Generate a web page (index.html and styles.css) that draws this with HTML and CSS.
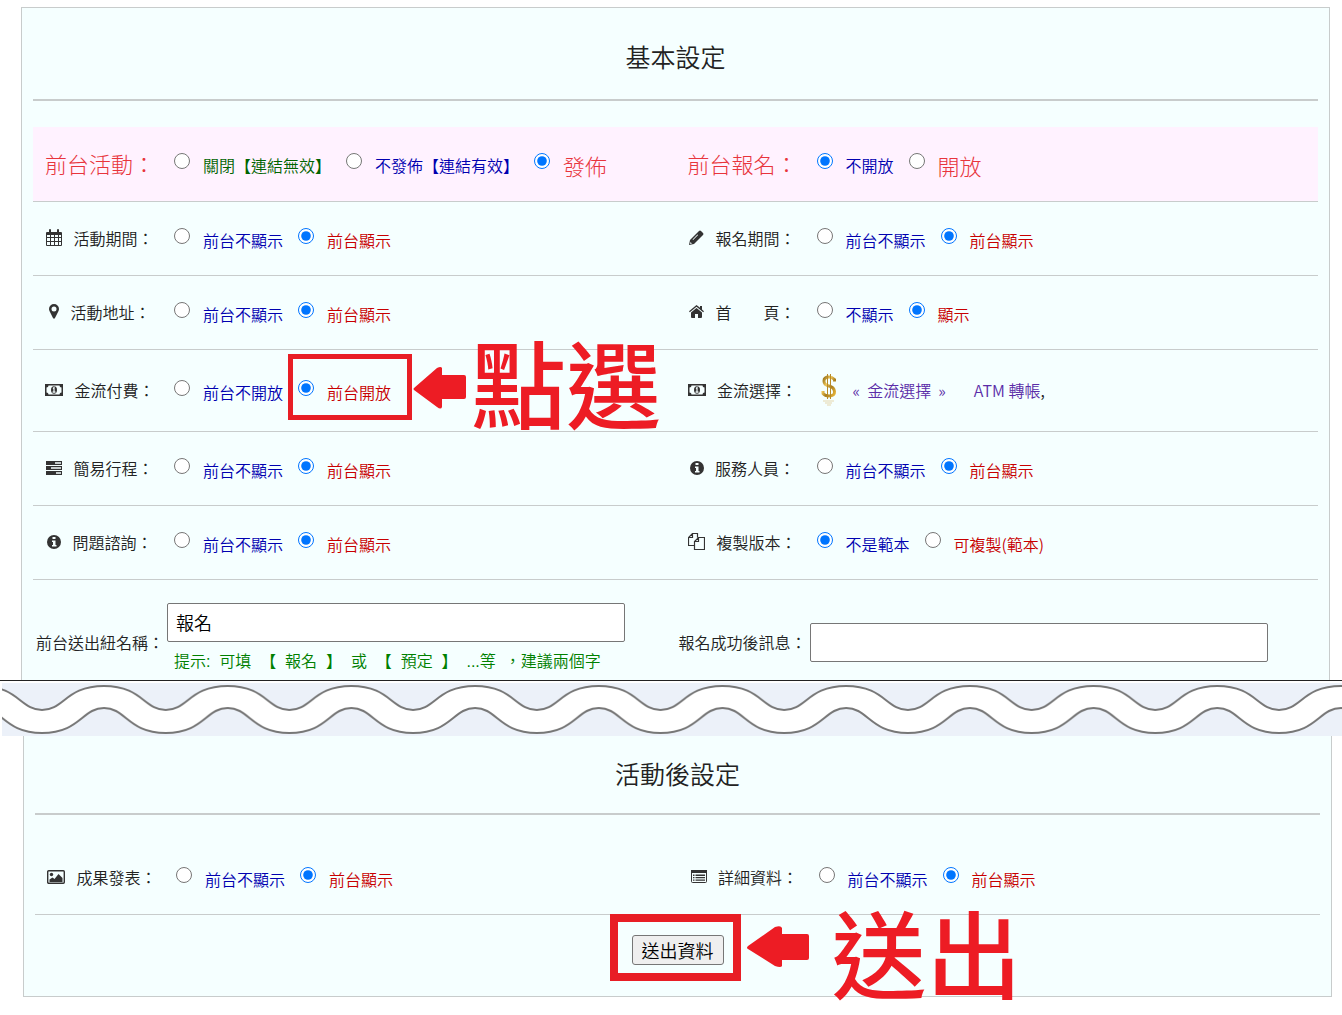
FILE: index.html
```html
<!DOCTYPE html>
<html lang="zh-Hant">
<head>
  <meta charset="UTF-8" />
  <meta name="viewport" content="width=device-width, initial-scale=1.0" />
  <title>活動設定</title>
  <link rel="stylesheet" href="styles.css">
</head>
<body>
  <form>
    <section class="panel">
      <h2>基本設定</h2>

      <div class="row publish">
        <div class="cell">
          <div class="name">前台活動：</div>
          <div class="options">
            <label class="off closed"><input type="radio" name="activity" />關閉【連結無效】</label>
            <label class="off"><input type="radio" name="activity" />不發佈【連結有效】</label>
            <label class="on big"><input type="radio" name="activity" checked />發佈</label>
          </div>
        </div>
        <div class="cell">
          <div class="name">前台報名：</div>
          <div class="options">
            <label class="off"><input type="radio" name="signup" checked />不開放</label>
            <label class="on big"><input type="radio" name="signup" />開放</label>
          </div>
        </div>
      </div>

      <div class="row">
        <div class="cell">
          <div class="name">
            <svg width="16" height="17" viewBox="0 0 16 17"><path fill="#333" fill-rule="evenodd" d="M1 3h2V1q0-1 1-1t1 1v2h6V1q0-1 1-1t1 1v2h2q1 0 1 1v12q0 1-1 1H1q-1 0-1-1V4q0-1 1-1zM1 6v2h3V6zM5 6v2h3V6zM9 6v2h3V6zM13 6v2h2V6zM1 9v3h3V9zM5 9v3h3V9zM9 9v3h3V9zM13 9v3h2V9zM1 13v3h3v-3zM5 13v3h3v-3zM9 13v3h3v-3zM13 13v3h2v-3z"/></svg>
            活動期間：
          </div>
          <div class="options">
            <label class="off"><input type="radio" name="period" />前台不顯示</label>
            <label class="on"><input type="radio" name="period" checked />前台顯示</label>
          </div>
        </div>
        <div class="cell">
          <div class="name">
            <svg width="15" height="15" viewBox="0 0 15 15"><path fill="#333" fill-rule="evenodd" d="M0 15l1-5L9 2l4 4-8 8zM10 1q1-1 2 0l2 2q1 1 0 2l-1 1-4-4zM1 14l2-.5L1.500 12zM3.500 9.500l.6.6 5-5-.6-.6z"/></svg>
            報名期間：
          </div>
          <div class="options">
            <label class="off"><input type="radio" name="signup-period" />前台不顯示</label>
            <label class="on"><input type="radio" name="signup-period" checked />前台顯示</label>
          </div>
        </div>
      </div>

      <div class="row">
        <div class="cell">
          <div class="name">
            <svg width="10" height="15" viewBox="0 0 10 15"><path fill="#333" fill-rule="evenodd" d="M5 0a5 5 0 0 1 5 5q0 1-.6 2.200L6 14q-1 1.600-2 0L.6 7.200Q0 6 0 5a5 5 0 0 1 5-5zm0 2.500a2.500 2.500 0 1 0 0 5 2.500 2.500 0 0 0 0-5z"/></svg>
            活動地址：
          </div>
          <div class="options">
            <label class="off"><input type="radio" name="address" />前台不顯示</label>
            <label class="on"><input type="radio" name="address" checked />前台顯示</label>
          </div>
        </div>
        <div class="cell">
          <div class="name">
            <svg width="15" height="13" viewBox="0 0 15 13"><path fill="#333" d="M7.500 3L13 7.500V12q0 1-1 1H9V9H6v4H3q-1 0-1-1V7.500zM7.500 0L11 2.800V1h2v3.500L15 6.200l-.8 1L7.500 1.700.8 7.200 0 6.200z"/></svg>
            首　　頁：
          </div>
          <div class="options">
            <label class="off"><input type="radio" name="home" />不顯示</label>
            <label class="on"><input type="radio" name="home" checked />顯示</label>
          </div>
        </div>
      </div>

      <div class="row tall">
        <div class="cell">
          <div class="name">
            <svg width="18" height="12" viewBox="0 0 18 12"><path fill="#333" fill-rule="evenodd" d="M0 0h18v12H0zM3.500 1.500Q3.500 3.500 1.500 3.500v5Q3.500 8.500 3.500 10.500h11Q14.500 8.500 16.500 8.500v-5Q14.500 3.500 14.500 1.500z"/><ellipse cx="9" cy="6" rx="3" ry="3.700" fill="#333"/><path fill="none" stroke="#f5ffff" stroke-width="1.200" d="M8 4.500l1-.8V8M7.500 8.200h3"/></svg>
            金流付費：
          </div>
          <div class="options">
            <label class="off"><input type="radio" name="payment" />前台不開放</label>
            <label class="on marked"><input type="radio" name="payment" checked />前台開放
              <span class="ring"></span>
              <span class="callout">
                <svg width="53" height="43" viewBox="0 0 53 43"><path fill="#ed1c24" d="M1 22L24 2q4-2 5 0v7h22q2 0 2 2v20q0 2-2 2H29v8q-1 3-5 0L1 24q-1-1 0-2z"/></svg>
                <span class="word">點選</span>
              </span>
            </label>
          </div>
        </div>
        <div class="cell">
          <div class="name">
            <svg width="18" height="12" viewBox="0 0 18 12"><path fill="#333" fill-rule="evenodd" d="M0 0h18v12H0zM3.500 1.500Q3.500 3.500 1.500 3.500v5Q3.500 8.500 3.500 10.500h11Q14.500 8.500 16.500 8.500v-5Q14.500 3.500 14.500 1.500z"/><ellipse cx="9" cy="6" rx="3" ry="3.700" fill="#333"/><path fill="none" stroke="#f5ffff" stroke-width="1.200" d="M8 4.500l1-.8V8M7.500 8.200h3"/></svg>
            金流選擇：
          </div>
          <div class="options links">
            <svg width="16" height="33" viewBox="0 0 16 33">
              <defs>
                <linearGradient id="gold" x1="0" y1="0" x2="1" y2="1">
                  <stop offset="0" stop-color="#8f6a12"/>
                  <stop offset=".35" stop-color="#f0c75a"/>
                  <stop offset=".6" stop-color="#a87c1c"/>
                  <stop offset="1" stop-color="#e8b63c"/>
                </linearGradient>
              </defs>
              <path fill="none" stroke="url(#gold)" stroke-width="3" d="M13.500 8.500V6.500Q11 4 8 4 3 4 3 8t5 5 5.500 5.500T8 23q-4 0-6-2.500V18"/>
              <path fill="none" stroke="#b88a26" stroke-width="1" d="M6.500 1v25M9.500 1v25"/>
              <path fill="none" stroke="#d9b25c" stroke-opacity=".5" d="M2 28h11M4 30h7M6 32h4"/>
            </svg>
            <a href="#">«&nbsp; 金流選擇&nbsp; »</a>
            <span class="method"><a href="#">ATM 轉帳</a>,</span>
          </div>
        </div>
      </div>

      <div class="row">
        <div class="cell">
          <div class="name">
            <svg width="16" height="14" viewBox="0 0 16 14"><path fill="#333" d="M0 0h16v4H0zM0 5h16v4H0zM0 10h16v4H0z"/><path fill="#c5cccc" d="M9 1h6v2H9zM5 6h10v2H5zM10 11h5v2h-5z"/></svg>
            簡易行程：
          </div>
          <div class="options">
            <label class="off"><input type="radio" name="schedule" />前台不顯示</label>
            <label class="on"><input type="radio" name="schedule" checked />前台顯示</label>
          </div>
        </div>
        <div class="cell">
          <div class="name">
            <svg width="14" height="14" viewBox="0 0 14 14"><circle cx="7" cy="7" r="7" fill="#333"/><path fill="#f5ffff" d="M5.500 2h3v2h-3zM5 5.500h3.500v4.500h1v1.500H5V10h1V7H5z"/></svg>
            服務人員：
          </div>
          <div class="options">
            <label class="off"><input type="radio" name="staff" />前台不顯示</label>
            <label class="on"><input type="radio" name="staff" checked />前台顯示</label>
          </div>
        </div>
      </div>

      <div class="row">
        <div class="cell">
          <div class="name">
            <svg width="14" height="14" viewBox="0 0 14 14"><circle cx="7" cy="7" r="7" fill="#333"/><path fill="#f5ffff" d="M5.500 2h3v2h-3zM5 5.500h3.500v4.500h1v1.500H5V10h1V7H5z"/></svg>
            問題諮詢：
          </div>
          <div class="options">
            <label class="off"><input type="radio" name="question" />前台不顯示</label>
            <label class="on"><input type="radio" name="question" checked />前台顯示</label>
          </div>
        </div>
        <div class="cell">
          <div class="name">
            <svg width="17" height="17" viewBox="0 0 17 17"><path fill="none" stroke="#333" stroke-width="1.200" d="M6.500 12.500h-6v-8l4-4h5v4M4.500.5v4h-4M10.500 4.500h6v12h-10v-8zM10.500 4.500v4h-4"/></svg>
            複製版本：
          </div>
          <div class="options">
            <label class="off"><input type="radio" name="template" checked />不是範本</label>
            <label class="on"><input type="radio" name="template" />可複製(範本)</label>
          </div>
        </div>
      </div>

      <div class="row fields">
        <div class="cell">
          <label class="name" for="submit-name">前台送出紐名稱：</label>
          <div class="field">
            <input type="text" id="submit-name" value="報名" />
            <p class="hint">提示:&nbsp; 可填&nbsp; 【&nbsp; 報名&nbsp; 】&nbsp; 或&nbsp; 【&nbsp; 預定&nbsp; 】&nbsp; ...等&nbsp; ，建議兩個字</p>
          </div>
        </div>
        <div class="cell">
          <label class="name" for="success-message">報名成功後訊息：</label>
          <div class="field">
            <input type="text" id="success-message" />
          </div>
        </div>
      </div>
    </section>

    <div class="tear">
      <svg width="100%" height="53">
        <defs>
          <pattern id="wave" x="40" y="0" width="123.700" height="53" patternUnits="userSpaceOnUse">
            <rect width="124" height="53" fill="#ecf1f9"/>
            <path fill="#fff" stroke="#777" stroke-width="2" d="M-62 3C-24 3-22 27 0 27S24 3 62 3s40 24 62 24 24-24 62-24V25C164 25 162 50 124 50S84 25 62 25 38 50 0 50-40 25-62 25z"/>
          </pattern>
        </defs>
        <rect width="100%" height="53" fill="url(#wave)"/>
      </svg>
    </div>

    <section class="panel after">
      <h2>活動後設定</h2>

      <div class="row">
        <div class="cell">
          <div class="name">
            <svg width="18" height="14" viewBox="0 0 18 14"><rect x=".7" y=".7" width="16.600" height="12.600" rx="1" fill="none" stroke="#333" stroke-width="1.400"/><circle cx="4.500" cy="4.500" r="1.700" fill="#333"/><path fill="#333" d="M2.500 12V9.500l3-2 2 1.500 4-5 4 4v4z"/></svg>
            成果發表：
          </div>
          <div class="options">
            <label class="off"><input type="radio" name="result" />前台不顯示</label>
            <label class="on"><input type="radio" name="result" checked />前台顯示</label>
          </div>
        </div>
        <div class="cell">
          <div class="name">
            <svg width="16" height="13" viewBox="0 0 16 13"><rect x=".5" y=".5" width="15" height="12" rx="1" fill="none" stroke="#333"/><path fill="#333" d="M0 0h16v3H0zM2 4.500h1.500V6H2zM4.500 4.500H14V6H4.500zM2 7h1.500v1.300H2zM4.500 7H14v1.300H4.500zM2 9.500h1.500v1.300H2zM4.500 9.500H14v1.300H4.500z"/></svg>
            詳細資料：
          </div>
          <div class="options">
            <label class="off"><input type="radio" name="detail" />前台不顯示</label>
            <label class="on"><input type="radio" name="detail" checked />前台顯示</label>
          </div>
        </div>
      </div>

      <div class="submit">
        <div class="marked">
          <button type="submit">送出資料</button>
          <span class="ring"></span>
          <span class="callout">
            <svg width="62" height="41" viewBox="0 0 62 41"><path fill="#ed1c24" d="M1 20L28 1q6-2 7 1v6h25q2 0 2 2v22q0 2-2 2H35v6q-1 2-7 0L1 23q-2-1 0-3z"/></svg>
            <span class="word">送出</span>
          </span>
        </div>
      </div>
    </section>
  </form>
</body>
</html>
```

FILE: styles.css
```css
body {
  margin: 0;
  padding: 7px 0 18px;
  background: #fff;
  color: #222;
  font-family: "Noto Sans CJK TC", sans-serif;
  font-size: 16px;
  font-weight: 350;
  line-height: 24px;
}

.panel {
  margin: 0 12px 0 21px;
  padding: 0 11px;
  border: 1px solid #c8cccc;
  border-bottom: 0;
  background: #f5ffff;
}

h2 {
  margin: 0 0 26px;
  padding: 29px 0 24px;
  border-bottom: 2px solid #c8cccc;
  font-size: 25px;
  font-weight: 350;
  line-height: 38px;
  text-align: center;
}

.row {
  display: grid;
  grid-template-columns: 1fr 1fr;
  min-height: 73px;
  border-bottom: 1px solid #c8cccc;
}

.row.tall {
  min-height: 81px;
}

.row.publish {
  min-height: 74px;
  background: #fff2ff;
}

.cell {
  display: flex;
  align-items: center;
  padding-bottom: 2px;
}

.name {
  display: flex;
  justify-content: center;
  align-items: center;
  gap: 11px;
  flex: none;
  width: 134px;
  white-space: nowrap;
}

.publish .name,
.big {
  color: #e8343c;
  font-size: 22px;
  font-weight: 300;
}

.options {
  display: flex;
  align-items: center;
  gap: 15px;
  padding: 4px 0 0 7px;
  white-space: nowrap;
}

.options label {
  display: flex;
  align-items: center;
  gap: 13px;
}

.options input {
  width: 16px;
  height: 16px;
  margin: 0 0 8px;
}

.off {
  color: #0000b0;
}

.on {
  color: #c80000;
}

.closed {
  color: #006400;
}

.on.big {
  color: #e8343c;
}

.links {
  gap: 16px;
  padding: 0 0 0 11px;
}

.links a {
  color: #5b2da8;
  text-decoration: none;
}

.method {
  margin-left: 12px;
}

/* input fields */
.row.fields {
  height: 124px;
  border-bottom: 0;
}

.fields .cell {
  padding-bottom: 0;
}

.field {
  flex: none;
}

.field input {
  display: block;
  box-sizing: border-box;
  width: 458px;
  height: 39px;
  padding: 0 8px;
  border: 1px solid #767676;
  border-radius: 2px;
  background: #fff;
  font: inherit;
  font-size: 18px;
}

.hint {
  margin: 8px 0 8px 7px;
  color: #008000;
  font-family: "Liberation Sans", "Noto Sans CJK TC", sans-serif;
  white-space: nowrap;
}

/* torn page strip */
.tear {
  position: relative;
  margin-top: -24px;
  padding: 2px 0 0 2px;
  border-top: 1px solid #222;
  background: #fff;
}

.tear svg {
  display: block;
}

.after {
  margin: 0 10px 0 23px;
  border-top: 0;
  border-bottom: 1px solid #c8cccc;
}

.after h2 {
  padding: 18px 0 21px;
}

.submit {
  display: flex;
  justify-content: center;
  padding: 20px 0 31px;
}

button {
  display: block;
  height: 30px;
  padding: 0 9px;
  border: 1px solid #767676;
  border-radius: 3px;
  background: #efefef;
  color: #000;
  font: inherit;
  font-size: 18px;
  line-height: 24px;
}

/* red marks */
.marked {
  position: relative;
}

.ring {
  position: absolute;
  inset: -26px -21px -16px -10px;
  border: 5px solid #e81e25;
}

.callout {
  position: absolute;
  top: 50%;
  left: 100%;
  display: flex;
  align-items: center;
  gap: 5px;
  height: 96px;
  margin: -52px 0 0 22px;
  color: #ed1c24;
  font-size: 95px;
  font-weight: 500;
  line-height: 96px;
  white-space: nowrap;
}

.word {
  padding-bottom: 14px;
}

.submit .ring {
  inset: -21px -17px -16px -22px;
  border-width: 8px;
}

.submit .callout {
  gap: 23px;
  margin: -52px 0 0 23px;
}

.submit .word {
  padding: 10px 0 0;
}
```
